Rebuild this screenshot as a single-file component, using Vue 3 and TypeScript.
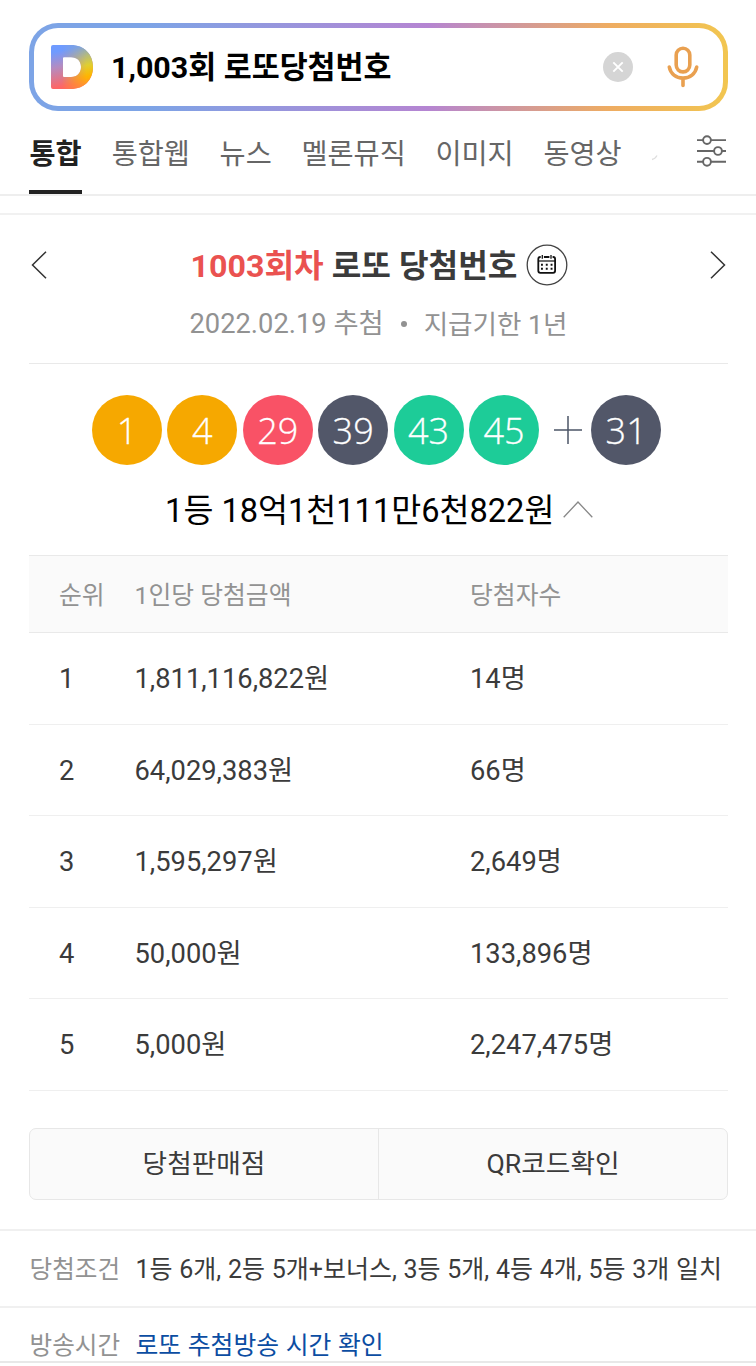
<script setup lang="ts">
interface Tab { label: string; active?: boolean }
interface Ball { n: number; tone: string }
interface Prize { rank: number; amount: string; winners: string }

const tabs: Tab[] = [
  { label: '통합', active: true },
  { label: '통합웹' },
  { label: '뉴스' },
  { label: '멜론뮤직' },
  { label: '이미지' },
  { label: '동영상' },
]
const balls: Ball[] = [
  { n: 1, tone: 'yellow' },
  { n: 4, tone: 'yellow' },
  { n: 29, tone: 'red' },
  { n: 39, tone: 'gray' },
  { n: 43, tone: 'green' },
  { n: 45, tone: 'green' },
]
const prizes: Prize[] = [
  { rank: 1, amount: '1,811,116,822원', winners: '14명' },
  { rank: 2, amount: '64,029,383원', winners: '66명' },
  { rank: 3, amount: '1,595,297원', winners: '2,649명' },
  { rank: 4, amount: '50,000원', winners: '133,896명' },
  { rank: 5, amount: '5,000원', winners: '2,247,475명' },
]
</script>

<template>
  <div class="page">
    <header>
      <div class="search">
        <div class="search-inner">
          <svg class="logo" width="42" height="44" viewBox="0 0 42 44">
            <defs>
              <linearGradient id="lgBase" x1="0.1" y1="0" x2="0.3" y2="1">
                <stop offset="0.15" stop-color="#6f9bff" />
                <stop offset="0.5" stop-color="#b58bc0" />
                <stop offset="0.95" stop-color="#ff6664" />
              </linearGradient>
              <linearGradient id="lgRight" x1="0.55" y1="0" x2="0.75" y2="1">
                <stop offset="0.05" stop-color="#86a6cf" />
                <stop offset="0.5" stop-color="#e0cf2f" />
                <stop offset="0.75" stop-color="#ffb400" />
                <stop offset="1" stop-color="#ff8c3c" />
              </linearGradient>
              <linearGradient id="lgFade" x1="0" y1="0" x2="1" y2="0">
                <stop offset="0.25" stop-color="#000" />
                <stop offset="0.85" stop-color="#fff" />
              </linearGradient>
              <mask id="fade"><rect width="42" height="44" fill="url(#lgFade)" /></mask>
            </defs>
            <path fill="url(#lgBase)" fill-rule="evenodd" d="M2 0H20C33 0 42 9 42 22S33 44 20 44H2Q0 44 0 42V2Q0 0 2 0ZM13 12.300Q12 12.300 12 13.300V31Q12 32 13 32H20C26 32 30 28 30 22S26 12.300 20 12.300Z" />
            <path fill="url(#lgRight)" mask="url(#fade)" fill-rule="evenodd" d="M2 0H20C33 0 42 9 42 22S33 44 20 44H2Q0 44 0 42V2Q0 0 2 0ZM13 12.300Q12 12.300 12 13.300V31Q12 32 13 32H20C26 32 30 28 30 22S26 12.300 20 12.300Z" />
          </svg>
          <span class="query">1,003회 로또당첨번호</span>
          <svg class="clear" width="30" height="30" viewBox="0 0 30 30">
            <circle cx="15" cy="15" r="15" fill="#d5d5d5" />
            <path d="M10.300 10.300L19.700 19.700M19.700 10.300L10.300 19.700" stroke="#fff" stroke-width="1.900" />
          </svg>
          <svg class="mic" width="32" height="42" viewBox="0 0 32 42" fill="none" stroke="#e9a050" stroke-width="3.600" stroke-linecap="round">
            <rect x="9.200" y="2.300" width="13.600" height="23.600" rx="6.800" />
            <path d="M2.300 21C3.500 27.800 9 32 16 32S28.500 27.800 29.700 21M16 32V39.500" />
          </svg>
        </div>
      </div>
      <nav class="tabs">
        <span v-for="t in tabs" :key="t.label" class="tab" :class="{ active: t.active }">{{ t.label }}</span>
        <svg class="more" width="7" height="7" viewBox="0 0 7 7"><path d="M1 5.500Q4 5 6 1.500" fill="none" stroke="#dedede" stroke-width="1.300" /></svg>
        <svg class="filter" width="30" height="32" viewBox="0 0 30 32" fill="none" stroke="#666" stroke-width="1.900">
          <path d="M0 5.100H6M14 5.100H29M0 16H17M25 16H29M0 26.800H6M14 26.800H29" />
          <circle cx="10" cy="5.100" r="3.900" />
          <circle cx="21" cy="16" r="3.900" />
          <circle cx="10" cy="26.800" r="3.900" />
        </svg>
      </nav>
    </header>

    <div class="gap"></div>

    <main>
      <section class="round">
        <svg width="16" height="28" viewBox="0 0 16 28" fill="none" stroke="#333" stroke-width="1.500"><path d="M15 .7L1.500 14L15 27.300" /></svg>
        <h1><span><em>1003회차</em> 로또 당첨번호</span>
          <svg width="42" height="42" viewBox="0 0 42 42" fill="none">
            <circle cx="21" cy="21" r="19.800" stroke="#444" stroke-width="1.300" />
            <rect x="12.300" y="13" width="16.800" height="15.800" rx="2" stroke="#111" stroke-width="1.800" />
            <path d="M12.500 17H29" stroke="#111" stroke-width="1.200" />
            <path d="M16.300 11V14.600M25 11V14.600" stroke="#fff" stroke-width="3.200" />
            <path d="M16.300 11V14.800M25 11V14.800" stroke="#111" stroke-width="1.300" />
            <path d="M15 20.700H26.900M15 24.800H26.900" stroke="#111" stroke-width="1.900" stroke-dasharray="1.900 2.900" />
          </svg>
        </h1>
        <svg width="16" height="28" viewBox="0 0 16 28" fill="none" stroke="#333" stroke-width="1.500"><path d="M1 .7L14.500 14L1 27.300" /></svg>
      </section>
      <p class="date"><span class="drawn">2022.02.19 추첨</span><i></i><span class="due">지급기한 1년</span></p>

      <section class="balls">
        <span v-for="b in balls" :key="b.n" class="ball" :class="b.tone">{{ b.n }}</span>
        <svg class="plus" width="28" height="28" viewBox="0 0 28 28" stroke="#4c5667" stroke-width="1.500"><path d="M0 14H28M14 0V28" /></svg>
        <span class="ball gray">31</span>
      </section>
      <p class="first"><span>1등 18억1천111만6천822원</span>
        <svg width="30" height="17" viewBox="0 0 30 17" fill="none" stroke="#888" stroke-width="1.300"><path d="M.7 16.300L15 1L29.300 16.300" /></svg>
      </p>

      <div class="table">
        <div class="row head"><span>순위</span><span>1인당 당첨금액</span><span>당첨자수</span></div>
        <div v-for="p in prizes" :key="p.rank" class="row">
          <span>{{ p.rank }}</span><span>{{ p.amount }}</span><span>{{ p.winners }}</span>
        </div>
      </div>

      <div class="buttons"><button>당첨판매점</button><button>QR코드확인</button></div>
    </main>

    <dl>
      <div class="info"><dt>당첨조건</dt><dd>1등 6개, 2등 5개+보너스, 3등 5개, 4등 4개, 5등 3개 일치</dd></div>
      <div class="info last"><dt>방송시간</dt><dd class="link">로또 추첨방송 시간 확인</dd></div>
    </dl>
  </div>
</template>

<style>
body { background: #fff; }
</style>

<style scoped>
.page {
  width: 756px;
  height: 1366px;
  overflow: hidden;
  font-family: Roboto, "Noto Sans CJK KR", sans-serif;
  color: #3b3b3b;
  white-space: nowrap;
}
.page * { box-sizing: border-box; }
header { height: 196px; padding-top: 23px; border-bottom: 2px solid #eee; }
.search {
  width: 699px;
  height: 88px;
  margin-left: 29px;
  padding: 5px;
  border-radius: 29px;
  background: linear-gradient(90deg, #7da4e6 0%, #7da4e6 17%, #b585d2 57%, #eeac62 83%, #f2c650 100%);
}
.search-inner {
  height: 78px;
  border-radius: 24px;
  background: #fff;
  display: flex;
  align-items: center;
  padding: 0 24px 0 17px;
}
.query { margin-left: 18px; padding-top: 2px; font-size: 30.400px; font-weight: 700; color: #000; line-height: 40px; }
.clear { margin-left: auto; }
.mic { margin-left: 34px; }
.tabs { display: flex; height: 83px; padding: 0 29px; }
.tab { height: 83px; margin-right: 29.700px; font-size: 28.350px; line-height: 87px; color: #666; }
.active { width: 53px; font-weight: 700; color: #222; border-bottom: 4px solid #222; text-align: center; }
.more { margin-top: 43px; }
.filter { margin: 24px 0 0 auto; }
.gap { height: 19px; border-bottom: 2px solid #f1f1f1; }
main { padding: 0 28px 0 29px; }
.round { display: flex; height: 78px; padding: 22px 2px 0 2px; align-items: center; justify-content: space-between; }
h1 { margin: 0 0 0 2px; display: flex; align-items: center; gap: 9px; font-size: 32.200px; line-height: 44px; font-weight: 700; }
h1 span { padding-top: 2px; }
em { color: #ea5250; font-style: normal; }
.date {
  margin: 0;
  height: 71px;
  padding-top: 12px;
  border-bottom: 1px solid #e9e9e9;
  display: flex;
  justify-content: center;
  font-size: 26.500px;
  line-height: 38px;
  color: #929292;
}
.drawn { font-size: 27.300px; }
.due { font-size: 26.600px; line-height: 39px; }
.date i { width: 6px; height: 6px; margin: 16px 17px 0; border-radius: 50%; background: #929292; }
.balls { display: flex; align-items: center; margin: 31px 0 0 63px; }
.ball {
  width: 70px;
  height: 70px;
  margin-right: 5.400px;
  border-radius: 50%;
  text-align: center;
  color: #fff;
  font: 300 36px/72px "Open Sans", sans-serif;
  -webkit-text-stroke: 0.300px #fff;
}
.yellow { background: #f6a800; }
.red { background: #f95266; }
.gray { background: #525769; }
.green { background: #1dcc98; }
.plus { margin: 0 9px 0 9.800px; }
.first {
  margin: 0;
  height: 90px;
  display: flex;
  align-items: center;
  justify-content: center;
  gap: 8.500px;
  font-size: 32.600px;
  line-height: 48px;
  color: #000;
}
.first span { padding: 1px 0 0 1px; }
.first svg { margin-bottom: 2px; }
.row {
  display: grid;
  grid-template-columns: 75.500px 335.500px 1fr;
  height: 91.500px;
  padding-left: 30px;
  border-bottom: 1px solid #efefef;
  font-size: 27.300px;
  line-height: 92px;
}
.head {
  height: 78px;
  background: #fafafa;
  border-top: 1px solid #e9e9e9;
  border-bottom: 1px solid #e9e9e9;
  font-size: 24.800px;
  line-height: 79px;
  color: #929292;
}
.buttons {
  display: flex;
  height: 72px;
  margin-top: 37px;
  border: 1px solid #e7e7e7;
  border-radius: 7px;
  background: #fafafa;
}
button {
  flex: 1;
  padding: 0;
  border: 0;
  background: none;
  font-family: inherit;
  font-size: 26.700px;
  line-height: 70px;
  color: #3b3b3b;
}
button + button { border-left: 1px solid #e7e7e7; }
dl { margin: 29px 0 0; }
.info {
  display: flex;
  height: 77px;
  padding-left: 29.500px;
  border-top: 2px solid #f0f0f0;
  font-size: 24.600px;
  line-height: 77px;
}
.last { height: 57px; border-bottom: 2px solid #e8e8e8; line-height: 76px; }
dt { width: 106px; color: #929292; }
dd { margin: 0; font-size: 25px; word-spacing: 0.500px; }
.link { color: #0b4da2; font-size: 24.800px; }
</style>
